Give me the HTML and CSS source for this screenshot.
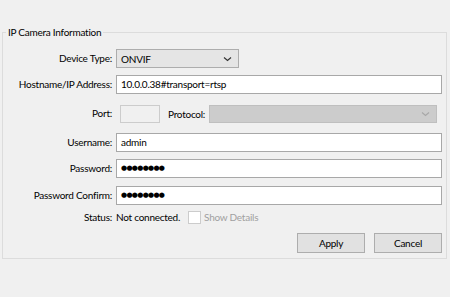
FILE: index.html
```html
<!DOCTYPE html>
<html lang="en">
<head>
  <meta charset="UTF-8" />
  <title>IP Camera Information</title>
  <link rel="stylesheet" href="styles.css">
</head>
<body>
  <fieldset class="group">
    <legend>IP Camera Information</legend>
    <div class="form">
      <label class="label">Device Type:</label>
      <div class="combo">
        <span>ONVIF</span>
        <svg class="chevron" width="9" height="6" viewBox="0 0 9 6"><path d="M1 1.5 L4.5 4.5 L8 1.5" fill="none" stroke="#333" stroke-width="1.2"/></svg>
      </div>

      <label class="label">Hostname/IP Address:</label>
      <div class="text">10.0.0.38#transport=rtsp</div>

      <label class="label">Port:</label>
      <div class="port-row">
        <div class="port"></div>
        <span class="inline-label">Protocol:</span>
        <div class="combo disabled">
          <span></span>
          <svg class="chevron" width="9" height="6" viewBox="0 0 9 6"><path d="M1 1.5 L4.5 4.5 L8 1.5" fill="none" stroke="#a8a8a8" stroke-width="1.2"/></svg>
        </div>
      </div>

      <label class="label">Username:</label>
      <div class="text">admin</div>

      <label class="label">Password:</label>
      <div class="text dots">●●●●●●●●</div>

      <label class="label">Password Confirm:</label>
      <div class="text dots">●●●●●●●●</div>

      <span class="label status-label">Status:</span>
      <div class="status">
        <span>Not connected.</span>
        <span class="check"></span>
        <span class="muted">Show Details</span>
      </div>

      <div class="buttons">
        <button class="btn">Apply</button>
        <button class="btn">Cancel</button>
      </div>
    </div>
  </fieldset>
</body>
</html>
```

FILE: styles.css
```css
body {
  margin: 0;
  background: #f0f0f0;
  font-family: Lato, "Noto Sans", sans-serif;
  font-size: 10px;
  letter-spacing: -0.25px;
  color: #000;
}

.group {
  margin: 24px 3px 0 2px;
  padding: 0 4px 0 0;
  border: 1px solid #dcdcdc;
  height: 235px;
  box-sizing: border-box;
}

.group legend {
  margin-left: 3px;
  padding: 0 2px;
  line-height: 16px;
}

.form {
  display: grid;
  grid-template-columns: 109px 1fr;
  grid-template-rows: 26px 29px 29px 26px 27px 23px 24px 26px;
  column-gap: 4px;
  align-items: start;
  padding-top: 9px;
}

.label {
  text-align: right;
  line-height: 19px;
  white-space: nowrap;
}

.text {
  height: 19px;
  box-sizing: border-box;
  background: #fff;
  border: 1px solid #a8a8a8;
  padding: 0 4px;
  line-height: 17px;
}

.dots {
  font-family: "DejaVu Sans", sans-serif;
  font-size: 7px;
  letter-spacing: -0.7px;
}

.combo {
  width: 123px;
  height: 19px;
  box-sizing: border-box;
  display: flex;
  align-items: center;
  justify-content: space-between;
  background: #e5e5e5;
  border: 1px solid #adadad;
  padding: 0 6px 0 4px;
}

.combo.disabled {
  flex: 1;
  height: 18px;
  margin-right: 5px;
  background: #cccccc;
  border-color: #bfbfbf;
}

.port-row {
  display: flex;
  align-items: center;
  margin-top: 1px;
}

.port {
  width: 40px;
  height: 18px;
  box-sizing: border-box;
  margin-left: 4px;
  border: 1px solid #cccccc;
}

.inline-label {
  margin: 0 4px 0 8px;
}

.status-label,
.status {
  line-height: 16px;
}

.status {
  display: flex;
  align-items: center;
}

.check {
  width: 11px;
  height: 11px;
  margin: 0 3px 0 8px;
  background: #fff;
  border: 1px solid #cccccc;
}

.muted {
  color: #a0a0a0;
}

.buttons {
  grid-column: 1 / 3;
  display: flex;
  justify-content: flex-end;
  gap: 9px;
}

.btn {
  width: 68px;
  height: 20px;
  padding: 0;
  font: inherit;
  letter-spacing: inherit;
  color: #000;
  background: #e1e1e1;
  border: 1px solid #adadad;
}
```
